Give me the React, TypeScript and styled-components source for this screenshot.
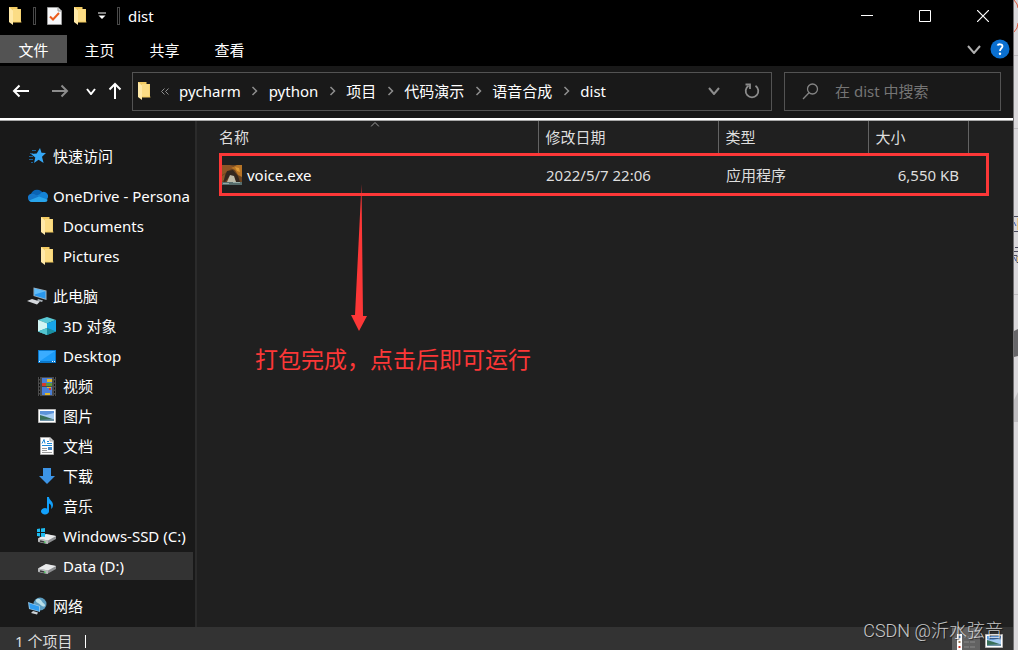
import React from "react";
import styled, { createGlobalStyle, css } from "styled-components";

const Global = createGlobalStyle`
  * { box-sizing: border-box; }
  html, body { margin: 0; background: #dad8db; }
  body, button, input {
    font-family: "Noto Sans", "Noto Sans CJK SC", sans-serif;
    font-size: 15px;
    line-height: 20px;
  }
  button { border: 0; padding: 0; background: none; color: inherit; }
  svg { display: block; flex: none; }
`;

const Desktop = styled.div`
  display: flex;
  height: 100vh;
  overflow: hidden;
`;

const Window = styled.div`
  position: relative;
  flex: 1;
  min-width: 0;
  display: flex;
  flex-direction: column;
  background: #202020;
  color: #fff;
  border-right: 1px solid #727173;
`;

const Behind = styled.div`
  width: 4px;
  flex: none;
  overflow: hidden;
  background: #dad8db;
`;

const TitleBar = styled.header`
  display: flex;
  align-items: center;
  height: 32px;
  flex: none;
  padding-right: 1px;
  background: #000;
`;

const QuickTools = styled.div`
  display: flex;
  align-items: center;
  gap: 11px;
  padding-left: 8px;
`;

const ToolButton = styled.button`
  display: grid;
  place-items: center;
`;

const Divider = styled.span`
  width: 3px;
  height: 18px;
  border: 1px solid #4a4a4a;
`;

const Title = styled.h1`
  flex: 1;
  margin: 0 0 0 8px;
  font-size: 15px;
  font-weight: 400;
`;

const Caption = styled.button`
  display: grid;
  place-items: center;
  width: 58px;
  height: 32px;
`;

const Ribbon = styled.nav`
  display: flex;
  align-items: center;
  height: 34px;
  flex: none;
  background: #000;
`;

const Tab = styled.button<{ $file?: boolean }>`
  width: 65px;
  height: 28px;
  padding-top: 2px;
  ${(p) => p.$file && css`width: 67px; background: #535353;`}
`;

const Spacer = styled.span`
  flex: 1;
`;

const RibbonButton = styled.button`
  display: grid;
  place-items: center;
  width: 26px;
  height: 28px;
`;

const NavBar = styled.div`
  display: flex;
  align-items: center;
  height: 52px;
  flex: none;
  padding: 0 12px 2px 7px;
  background: #191919;
`;

const NavButton = styled.button<{ $w: number }>`
  display: grid;
  place-items: center;
  width: ${(p) => p.$w}px;
  height: 37px;
`;

const AddressBox = styled.div`
  display: flex;
  align-items: center;
  flex: 1;
  min-width: 0;
  height: 39px;
  padding-left: 4px;
  border: 1px solid #535353;
`;

const Crumbs = styled.ol`
  display: flex;
  align-items: center;
  flex: 1;
  min-width: 0;
  margin: 0;
  padding: 0;
  list-style: none;
`;

const Crumb = styled.li`
  display: flex;
  align-items: center;
  white-space: nowrap;
`;

const CrumbGap = styled.span`
  display: grid;
  place-items: center;
  width: 28px;
`;

const SearchBox = styled.label`
  display: flex;
  align-items: center;
  gap: 16px;
  width: 217px;
  height: 39px;
  margin-left: 12px;
  padding-left: 17px;
  border: 1px solid #535353;
`;

const SearchInput = styled.input`
  flex: 1;
  min-width: 0;
  padding: 0;
  border: 0;
  outline: 0;
  background: none;
  color: #fff;
  &::placeholder { color: #757575; opacity: 1; }
`;

const Body = styled.div`
  display: flex;
  flex: 1;
  min-height: 0;
  border-top: 2px solid #fff;
  box-shadow: inset 0 1px 0 #a8a8a8;
  padding-top: 1px;
`;

const Sidebar = styled.aside`
  width: 197px;
  flex: none;
  overflow: hidden;
  padding: 20px 2px 0 0;
  background: #191919;
  border-right: 2px solid #2b2b2b;
`;

const Group = styled.ul`
  margin: 0 0 12px;
  padding: 0;
  list-style: none;
`;

const Place = styled.a<{ $child?: boolean; $active?: boolean }>`
  display: flex;
  align-items: center;
  gap: 5px;
  height: 28px;
  margin: 1px 0 2px;
  padding-left: ${(p) => (p.$child ? 36 : 26)}px;
  overflow: hidden;
  white-space: nowrap;
  color: #fff;
  text-decoration: none;
  background: ${(p) => (p.$active ? "#333" : "transparent")};
`;

const PlaceIcon = styled.span`
  display: grid;
  place-items: center;
  width: 22px;
  height: 22px;
  flex: none;
`;

const Content = styled.main`
  position: relative;
  flex: 1;
  min-width: 0;
  padding-left: 15px;
`;

const FileTable = styled.table`
  width: 756px;
  table-layout: fixed;
  border-collapse: collapse;
`;

const Head = styled.th<{ $w: number }>`
  position: relative;
  width: ${(p) => p.$w}px;
  height: 32px;
  padding: 0 7px;
  font-weight: 400;
  text-align: left;
  color: #dedede;
  border-right: 1px solid #636363;
`;

const SortMark = styled.span`
  position: absolute;
  top: 1px;
  left: 50%;
  transform: translateX(-50%);
`;

const Cell = styled.td<{ $right?: boolean }>`
  height: 43px;
  padding: 0 9px 0 8px;
  color: #dedede;
  text-align: ${(p) => (p.$right ? "right" : "left")};
`;

const FileName = styled.span`
  display: flex;
  align-items: center;
  gap: 5px;
  padding-left: 2px;
  color: #fff;
`;

const Highlight = styled.div`
  position: absolute;
  top: 32px;
  left: 22px;
  width: 770px;
  height: 43px;
  border: 3px solid #fc3737;
`;

const Pointer = styled.div`
  position: absolute;
  top: 63px;
  left: 152px;
`;

const Note = styled.p`
  position: absolute;
  top: 223px;
  left: 58px;
  margin: 0;
  font-size: 23px;
  line-height: 30px;
  white-space: nowrap;
  color: #fc3737;
`;

const StatusBar = styled.footer`
  display: flex;
  align-items: flex-start;
  height: 23px;
  flex: none;
  overflow: hidden;
  padding: 0 5px 0 15px;
  background: #333;
  color: #dedede;
  line-height: 28px;
`;

const StatusDivider = styled.span`
  width: 1px;
  height: 13px;
  margin: 8px 0 0 13px;
  background: #fff;
`;

const ViewButton = styled.button<{ $active?: boolean }>`
  display: grid;
  place-items: center;
  width: 28px;
  height: 28px;
  background: ${(p) => (p.$active ? "#626262" : "transparent")};
`;

const Watermark = styled.span`
  position: absolute;
  right: 10px;
  bottom: 7px;
  font-family: Roboto, "Noto Sans CJK SC", sans-serif;
  font-size: 18px;
  font-weight: 300;
  line-height: 24px;
  white-space: nowrap;
  color: rgba(255, 255, 255, 0.75);
  text-shadow: 1px 1px 1px rgba(0, 0, 0, 0.6);
`;

const Folder = () => (
  <svg width="14" height="18" viewBox="0 0 14 18" aria-hidden="true">
    <path d="M1 0h8.500v2H13v12l.5 1.500H6L1 15z" fill="#f3cb61" />
    <path d="M5 2h7.500v12.500H5z" fill="#fbdc85" />
    <path d="M1 0l4 3.500V18l-4-3z" fill="#ffe9a8" />
  </svg>
);

const CheckDoc = () => (
  <svg width="15" height="18" viewBox="0 0 15 18" aria-hidden="true">
    <path d="M.5.5h10.500l3.500 3.500v13.500H.5z" fill="#f7f8fa" stroke="#9b9b9b" />
    <path d="M11 .5V4h3.500" fill="#ddd" stroke="#9b9b9b" />
    <path d="M3 9.500l3 3L12 6" fill="none" stroke="#ea5b1c" strokeWidth="2" />
  </svg>
);

const Chevron = ({ w = 10, h = 6, color = "#fff", sw = 2 }) => (
  <svg width={w} height={h} viewBox={`0 0 ${w} ${h}`} aria-hidden="true">
    <path d={`M1 1l${w / 2 - 1} ${h - 2}L${w - 1} 1`} fill="none" stroke={color} strokeWidth={sw} />
  </svg>
);

const Arrow = ({ dir, color }: { dir: "left" | "right" | "up"; color: string }) => (
  <svg
    width="18"
    height="18"
    viewBox="0 0 18 18"
    fill="none"
    stroke={color}
    strokeWidth="2"
    aria-hidden="true"
    transform={dir === "right" ? "rotate(180)" : dir === "up" ? "rotate(90)" : undefined}
  >
    <path d="M2 9h15M7.500 3.500L2 9l5.500 5.500" />
  </svg>
);

const CrumbArrow = () => (
  <svg width="7" height="10" viewBox="0 0 7 10" aria-hidden="true">
    <path d="M1.500 1L5.500 5l-4 4" fill="none" stroke="#8f8f8f" strokeWidth="1.500" />
  </svg>
);

const Star = () => (
  <svg width="20" height="18" viewBox="0 0 20 18" aria-hidden="true">
    <path d="M13 1l1.500 4.800L19 6l-4 3.700 1.600 6.300-5-3.300L7 16l1.300-5.600L4 7l5.700-.5z" fill="#35a7f5" />
    <path d="M5 3.500h4M3 6.500h3M2 9.500h4M2 12.500h4M4 15.500h2" stroke="#1b5f94" strokeWidth="1" />
  </svg>
);

const Cloud = () => (
  <svg width="21" height="14" viewBox="0 0 21 14" aria-hidden="true">
    <path d="M4 5a6.500 6.500 0 0 1 12-.5L12 9 1 8a4 4 0 0 1 3-3z" fill="#0a64b5" />
    <path d="M13 5a4 4 0 0 1 7.500 4.500l-4 3L9 7z" fill="#1483d6" />
    <path d="M4.500 13a4.200 4.200 0 0 1-1-8c2-.5 4 0 5.500 1l3 1.500-5 5.500z" fill="#1577ca" />
    <path d="M2 11.500L12 7.500l8.500 3A2.500 2.500 0 0 1 18 13H4.500a4 4 0 0 1-2.500-1.500z" fill="#29a5ec" />
  </svg>
);

const Computer = () => (
  <svg width="20" height="18" viewBox="0 0 20 18" aria-hidden="true">
    <path d="M6.500.5l13 3V13l-13-4z" fill="#9fb4c2" />
    <path d="M7.500 1.500l11 2.700v7.500l-11-3.300z" fill="#2997ec" />
    <path d="M7.500 1.500l11 2.700L7.500 7.500z" fill="#62bdf8" />
    <path d="M5 12l8 2.500-3 3L0 14z" fill="#d5d9dd" />
    <path d="M11 12l5 1.500-1 1.500-5-1.500z" fill="#a9b2b9" />
  </svg>
);

const Cube = () => (
  <svg width="18" height="18" viewBox="0 0 18 18" aria-hidden="true">
    <path d="M9 0l9 3-9 3.500L0 3z" fill="#59c9d6" />
    <path d="M0 3l9 3.500V18l-9-3.500z" fill="#9ee5e6" />
    <path d="M0 3l9 3.500V11l-9 3.500z" fill="#d2f4f3" />
    <path d="M9 6.500L18 3v11.500L9 18z" fill="#0e93b8" />
    <path d="M9 6.500L18 3v11.500L9 11z" fill="#18a5e8" />
    <path d="M0 14.500L9 11l9 3.500L9 18z" fill="#1c8fa0" />
    <path d="M0 14.500L9 11v7z" fill="#53c4cf" />
  </svg>
);

const DesktopIcon = () => (
  <svg width="18" height="13" viewBox="0 0 18 13" aria-hidden="true">
    <path d="M0 0h18v13H0z" fill="#0b77c9" />
    <path d="M1 1h16v10H1z" fill="#1b9bf8" />
    <path d="M1 1h16L2 11H1z" fill="#3aacff" />
    <path d="M1 11.500h1m12 0h1m1 0h1" stroke="#fff" />
  </svg>
);

const Film = () => (
  <svg width="18" height="19" viewBox="0 0 18 19" aria-hidden="true">
    <path d="M0 0h18v19H0z" fill="#4b4b4b" />
    <path d="M1.500 0v19M16.500 0v19" stroke="#111" strokeDasharray="2 1.500" />
    <path d="M4 1h10v8H4zM4 10h10v8H4z" fill="#4b7fd8" />
    <path d="M9 2h5v3H9zM7 16h5v2H7z" fill="#e2b82c" />
    <path d="M4 6h4v3H4zM11 11h2v2h-2z" fill="#d9392b" />
    <path d="M8 6h6v3H8z" fill="#5a9c3c" />
    <path d="M9 10h4v1H9z" fill="#e2b82c" />
  </svg>
);

const Picture = () => (
  <svg width="18" height="14" viewBox="0 0 18 14" aria-hidden="true">
    <path d="M.5.5h17v13H.5z" fill="#fff" stroke="#b5b5b5" />
    <path d="M2 2h14v10H2z" fill="#a6cdf4" />
    <path d="M2 2h14v2L8 6 2 5z" fill="#5c93d9" />
    <path d="M2 6l5 1.500 9 3V11H2z" fill="#39705a" />
    <path d="M2 11l14-1v2H2z" fill="#6e93a8" />
  </svg>
);

const Doc = () => (
  <svg width="14" height="18" viewBox="0 0 14 18" aria-hidden="true">
    <path d="M.5.500h9.500l3.500 3.500v13.500H.5z" fill="#fff" stroke="#a9a9a9" />
    <path d="M10 .5V4h3.500" fill="#ddd" stroke="#a9a9a9" />
    <path d="M2 6.500L4 2.500l1 4M7 4.500h2M7 6.500h5M2 8.500h10" stroke="#2089d6" fill="none" />
    <path d="M2 11.500h5M2 13.500h5M2 15.500h10" stroke="#9a9a9a" />
    <path d="M8 10h4v3H8z" fill="#3f8acb" />
  </svg>
);

const Download = () => (
  <svg width="16" height="16" viewBox="0 0 16 16" aria-hidden="true">
    <path d="M4 0h8v8h4l-8 8-8-8h4z" fill="#3c94e6" />
  </svg>
);

const Music = () => (
  <svg width="13" height="18" viewBox="0 0 13 18" aria-hidden="true">
    <path d="M6 0h2c0 3 4 4 4 8 0 2-.7 3-2 4 .8-3-.3-5-2-5.500V14a4 3.200 0 1 1-2-2.500z" fill="#12a0fb" />
  </svg>
);

const Drive = ({ windows }: { windows?: boolean }) => (
  <svg width="20" height="16" viewBox="0 0 20 16" aria-hidden="true">
    <path d="M1 10.500L9 6l10 2v3l-9 5-9-2z" fill="#8d8f91" />
    <path d="M1 10.500L9 6l10 2-8 4.500z" fill="#e9eaeb" />
    <path d="M1 10.500l10 2V16l-10-2.500z" fill="#b9bbbd" />
    <path d="M3 13l4 1" stroke="#38363a" strokeWidth="1.500" />
    <path d="M7 14l1.500.4" stroke="#37c24a" strokeWidth="1.500" />
    {windows && <path d="M0 1l3-.4V4H0zM4 .5L8 0v4H4zM0 5h3v3.400L0 8zM4 5h4v4l-4-.5z" fill="#1dbcf2" />}
  </svg>
);

const Network = () => (
  <svg width="19" height="18" viewBox="0 0 19 18" aria-hidden="true">
    <circle cx="12" cy="7" r="6.500" fill="#5b9cc0" />
    <path d="M8 2.500c3-2 5 0 6 2s3 2 3 4-3 1-5-1-5-2-4-5z" fill="#b9dfe9" />
    <path d="M0 5l12 4v6L1 12z" fill="#8fc4e6" />
    <path d="M1 6.200l10 3.300V14L2 11.500z" fill="#2f9df0" />
    <path d="M5 14l5 1.500-1 2L3 16z" fill="#cdd3d7" />
  </svg>
);

const AppThumb = () => (
  <svg width="20" height="20" viewBox="0 0 20 20" aria-hidden="true">
    <path d="M0 0h20v20H0z" fill="#6b4420" />
    <path d="M0 0h8l4 2-7 5-5 3z" fill="#8c5526" />
    <path d="M9 3l6-3h5v12l-4-2-3-5z" fill="#b67426" />
    <path d="M13 2l4 1 1 4-3-1z" fill="#e09a35" />
    <path d="M5 6l6-1 5 6 2 6h-4l-3-6-4 1-4 5-2-1z" fill="#33271f" />
    <path d="M8 10l4 1 2 6H5z" fill="#bdbba9" />
    <path d="M0 11l3-2-1 6-2 2z" fill="#8a5a2c" />
    <path d="M0 17h20v3H0z" fill="#566c6c" />
    <path d="M1 18.500h6M11 17.500h7" stroke="#93a8a4" />
  </svg>
);

const DetailsView = () => (
  <svg width="20" height="18" viewBox="0 0 20 18" aria-hidden="true">
    <path d="M1 2h5v16H1z" fill="#fff" />
    <path d="M2.500 4h2v2h-2z" fill="#4a89c8" />
    <path d="M2.500 9h2v2h-2z" fill="#9a7a5a" />
    <path d="M2.500 14h2v2h-2z" fill="#cf3a2a" />
    <path d="M8 5h5M14 5h5M8 10h5M14 10h5M8 15h5M14 15h5" stroke="#8a8a8a" />
  </svg>
);

const path = ["pycharm", "python", "项目", "代码演示", "语音合成", "dist"];

type Item = { name: string; icon: React.ReactNode; child?: boolean; active?: boolean };

const groups: Item[][] = [
  [{ name: "快速访问", icon: <Star /> }],
  [
    { name: "OneDrive - Persona", icon: <Cloud /> },
    { name: "Documents", icon: <Folder />, child: true },
    { name: "Pictures", icon: <Folder />, child: true },
  ],
  [
    { name: "此电脑", icon: <Computer /> },
    { name: "3D 对象", icon: <Cube />, child: true },
    { name: "Desktop", icon: <DesktopIcon />, child: true },
    { name: "视频", icon: <Film />, child: true },
    { name: "图片", icon: <Picture />, child: true },
    { name: "文档", icon: <Doc />, child: true },
    { name: "下载", icon: <Download />, child: true },
    { name: "音乐", icon: <Music />, child: true },
    { name: "Windows-SSD (C:)", icon: <Drive windows />, child: true },
    { name: "Data (D:)", icon: <Drive />, child: true, active: true },
  ],
  [{ name: "网络", icon: <Network /> }],
];

export default function App() {
  return (
    <Desktop>
      <Global />
      <Window>
        <TitleBar>
          <QuickTools>
            <Folder />
            <Divider />
            <ToolButton aria-label="属性"><CheckDoc /></ToolButton>
            <ToolButton aria-label="新建文件夹"><Folder /></ToolButton>
            <ToolButton aria-label="自定义快速访问工具栏">
              <svg width="8" height="8" viewBox="0 0 8 8" aria-hidden="true">
                <path d="M0 1h8" stroke="#fff" />
                <path d="M.5 3.500h7L4 7z" fill="#fff" />
              </svg>
            </ToolButton>
            <Divider />
          </QuickTools>
          <Title>dist</Title>
          <Caption aria-label="最小化">
            <svg width="12" height="12" viewBox="0 0 12 12"><path d="M0 5.500h12" stroke="#fff" /></svg>
          </Caption>
          <Caption aria-label="最大化">
            <svg width="12" height="12" viewBox="0 0 12 12"><path d="M.5.5h11v11H.5z" fill="none" stroke="#fff" /></svg>
          </Caption>
          <Caption aria-label="关闭">
            <svg width="12" height="12" viewBox="0 0 12 12"><path d="M0 0l12 12M12 0L0 12" stroke="#fff" strokeWidth="1.200" /></svg>
          </Caption>
        </TitleBar>

        <Ribbon>
          <Tab $file>文件</Tab>
          <Tab>主页</Tab>
          <Tab>共享</Tab>
          <Tab>查看</Tab>
          <Spacer />
          <RibbonButton aria-label="展开功能区"><Chevron w={14} h={9} color="#b0b0b0" sw={2} /></RibbonButton>
          <RibbonButton aria-label="帮助">
            <svg width="20" height="20" viewBox="0 0 20 20" aria-hidden="true">
              <circle cx="10" cy="10" r="9.500" fill="#0a6fd0" />
              <path d="M7.500 6.500c.7-1.800 5-1.700 5 .8 0 2-2.500 2-2.500 4.700" fill="none" stroke="#fff" strokeWidth="1.800" />
              <circle cx="10" cy="14.700" r="1.200" fill="#fff" />
            </svg>
          </RibbonButton>
        </Ribbon>

        <NavBar>
          <NavButton $w={28} aria-label="后退"><Arrow dir="left" color="#fff" /></NavButton>
          <NavButton $w={50} aria-label="前进"><Arrow dir="right" color="#8c8c8c" /></NavButton>
          <NavButton $w={12} aria-label="最近的位置"><Chevron w={10} h={7} /></NavButton>
          <NavButton $w={35} aria-label="向上"><Arrow dir="up" color="#fff" /></NavButton>
          <AddressBox>
            <Folder />
            <CrumbGap>
              <svg width="8" height="7" viewBox="0 0 8 7" aria-hidden="true">
                <path d="M3.500.5l-3 3 3 3M7.500.5l-3 3 3 3" fill="none" stroke="#8f8f8f" />
              </svg>
            </CrumbGap>
            <Crumbs>
              {path.map((p, i) => (
                <Crumb key={p}>
                  {i > 0 && <CrumbGap><CrumbArrow /></CrumbGap>}
                  {p}
                </Crumb>
              ))}
            </Crumbs>
            <NavButton $w={38} aria-label="以前的位置"><Chevron w={12} h={8} color="#8c8c8c" /></NavButton>
            <NavButton $w={38} aria-label="刷新">
              <svg width="16" height="16" viewBox="0 0 16 16" fill="none" stroke="#8c8c8c" strokeWidth="1.800" aria-hidden="true">
                <path d="M11.500 2.800A6.300 6.300 0 1 1 4.500 2.800" />
                <path d="M1.500 1.500h4.500v4.500" />
              </svg>
            </NavButton>
          </AddressBox>
          <SearchBox>
            <svg width="17" height="17" viewBox="0 0 17 17" fill="none" stroke="#858585" strokeWidth="1.300" aria-hidden="true">
              <circle cx="10.500" cy="6" r="5" />
              <path d="M7 9.800L1 16" />
            </svg>
            <SearchInput aria-label="搜索" placeholder="在 dist 中搜索" />
          </SearchBox>
        </NavBar>

        <Body>
          <Sidebar>
            {groups.map((g) => (
              <Group key={g[0].name}>
                {g.map((it) => (
                  <li key={it.name}>
                    <Place href="#" $child={it.child} $active={it.active}>
                      <PlaceIcon>{it.icon}</PlaceIcon>
                      {it.name}
                    </Place>
                  </li>
                ))}
              </Group>
            ))}
          </Sidebar>

          <Content>
            <FileTable>
              <thead>
                <tr>
                  <Head $w={326}>
                    <SortMark>
                      <svg width="9" height="5" viewBox="0 0 9 5"><path d="M.5 4.500l4-4 4 4" fill="none" stroke="#9a9a9a" /></svg>
                    </SortMark>
                    名称
                  </Head>
                  <Head $w={180}>修改日期</Head>
                  <Head $w={150}>类型</Head>
                  <Head $w={100}>大小</Head>
                </tr>
              </thead>
              <tbody>
                <tr>
                  <Cell><FileName><AppThumb />voice.exe</FileName></Cell>
                  <Cell>2022/5/7 22:06</Cell>
                  <Cell>应用程序</Cell>
                  <Cell $right>6,550 KB</Cell>
                </tr>
              </tbody>
            </FileTable>
            <Highlight />
            <Pointer>
              <svg width="20" height="148" viewBox="0 0 20 148" aria-hidden="true">
                <path d="M12.500 0l1.500 132h4L10 147 2 131h4z" fill="#fc3737" />
              </svg>
            </Pointer>
            <Note>打包完成，点击后即可运行</Note>
          </Content>
        </Body>

        <StatusBar>
          1 个项目
          <StatusDivider />
          <Spacer />
          <ViewButton $active aria-label="详细信息"><DetailsView /></ViewButton>
          <ViewButton aria-label="大图标"><Picture /></ViewButton>
        </StatusBar>
        <Watermark>CSDN @沂水弦音</Watermark>
      </Window>
      <Behind>
        <svg width="4" height="440" viewBox="0 0 4 440" aria-hidden="true">
          <path d="M0 0l3 4 1 4M0 32l3-4 1-5" stroke="#d9593f" fill="none" />
          <path d="M0 55.500h4M0 128.500h4M0 294.500h4" stroke="#bdbbbe" />
          <path d="M0 216.500h4M0 231.500h4M1 247.500h3M0 251.500h4M0 255.500h3v7h1" stroke="#4a4a5c" fill="none" />
          <path d="M3 218h1v12H3zM3 257h1v5H3z" fill="#e6c48c" />
          <path d="M0 222l2 4M0 257l2 4" stroke="#3c5fa8" />
          <path d="M0 331l4-2v27l-4 1z" fill="#68676a" />
          <path d="M0 400l4-8v30H0z" fill="#bfbdc0" />
        </svg>
      </Behind>
    </Desktop>
  );
}
